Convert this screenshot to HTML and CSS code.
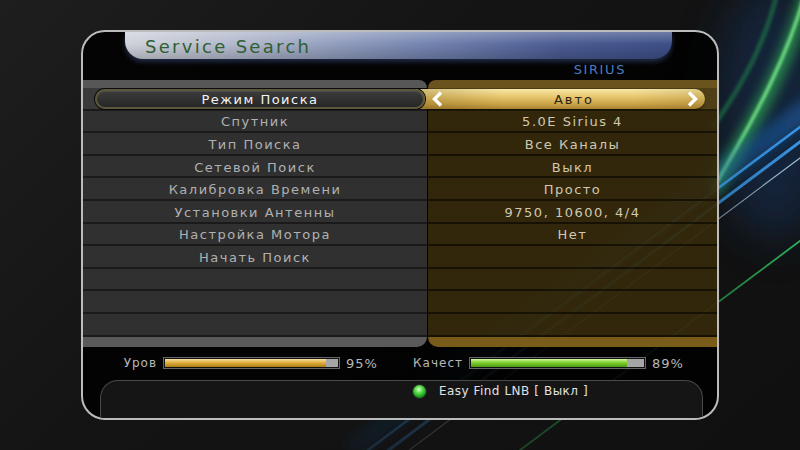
FILE: index.html
```html
<!DOCTYPE html>
<html lang="ru">
<head>
    <meta charset="UTF-8">
    <title>Service Search</title>
    <link rel="stylesheet" href="styles.css">
</head>
<body>
    <div class="screen">
        <!-- background light streaks -->
        <svg class="streaks" width="800" height="450" viewBox="0 0 800 450">
            <defs>
                <filter id="glow" x="-50%" y="-50%" width="200%" height="200%"><feGaussianBlur stdDeviation="6"/></filter>
                <filter id="haze" x="-50%" y="-50%" width="200%" height="200%"><feGaussianBlur stdDeviation="22"/></filter>
                <filter id="soft" x="-20%" y="-20%" width="140%" height="140%"><feGaussianBlur stdDeviation="1.6"/></filter>
                <filter id="thin" x="-20%" y="-20%" width="140%" height="140%"><feGaussianBlur stdDeviation="0.7"/></filter>
                <linearGradient id="fadeGlow" gradientUnits="userSpaceOnUse" x1="820" y1="100" x2="350" y2="450">
                    <stop offset="0" stop-color="#1b5fa8" stop-opacity="0.6"/>
                    <stop offset="0.3" stop-color="#1b5fa8" stop-opacity="0.35"/>
                    <stop offset="1" stop-color="#1b5fa8" stop-opacity="0.08"/>
                </linearGradient>
                <linearGradient id="fadeBlue" gradientUnits="userSpaceOnUse" x1="820" y1="110" x2="360" y2="460">
                    <stop offset="0" stop-color="#3a9cf0" stop-opacity="1"/>
                    <stop offset="0.3" stop-color="#3a9cf0" stop-opacity="0.6"/>
                    <stop offset="1" stop-color="#3a9cf0" stop-opacity="0.15"/>
                </linearGradient>
                <linearGradient id="fadeWhite" gradientUnits="userSpaceOnUse" x1="820" y1="140" x2="370" y2="480">
                    <stop offset="0" stop-color="#c0e4ff" stop-opacity="0.9"/>
                    <stop offset="0.3" stop-color="#c0e4ff" stop-opacity="0.4"/>
                    <stop offset="1" stop-color="#c0e4ff" stop-opacity="0.1"/>
                </linearGradient>
                <linearGradient id="fadeGreen" gradientUnits="userSpaceOnUse" x1="820" y1="226" x2="480" y2="480">
                    <stop offset="0" stop-color="#2ec060" stop-opacity="1"/>
                    <stop offset="0.35" stop-color="#2ec060" stop-opacity="0.5"/>
                    <stop offset="1" stop-color="#2ec060" stop-opacity="0.25"/>
                </linearGradient>
            </defs>
            <ellipse cx="775" cy="110" rx="60" ry="130" fill="#12305a" opacity=".55" filter="url(#haze)"/>
            <path d="M808 -10 C792 50 762 112 712 192" stroke="#2fae55" stroke-width="14" fill="none" opacity=".7" filter="url(#glow)"/>
            <path d="M806 -10 C790 50 760 110 712 190" stroke="#7cf08c" stroke-width="3" fill="none" filter="url(#soft)"/>
            <path d="M778 -10 C766 40 745 82 712 128" stroke="#1f7a48" stroke-width="5" fill="none" opacity=".6" filter="url(#soft)"/>
            <path d="M820 100 L350 450" stroke="url(#fadeGlow)" stroke-width="22" fill="none" filter="url(#glow)"/>
            <path d="M820 112 L352 462" stroke="url(#fadeBlue)" stroke-width="2.5" fill="none" filter="url(#thin)"/>
            <path d="M820 127 L362 470" stroke="url(#fadeBlue)" stroke-width="3" fill="none" filter="url(#thin)"/>
            <path d="M820 143 L372 478" stroke="url(#fadeWhite)" stroke-width="1.2" fill="none"/>
            <path d="M820 226 L480 480" stroke="url(#fadeGreen)" stroke-width="1.8" fill="none" filter="url(#thin)"/>
        </svg>

        <div class="panel">
            <div class="title-tab"><span>Service Search</span></div>
            <div class="sat-name">SIRIUS</div>

            <div class="menu">
                <div class="cell l head"></div><div class="cell r head"></div>

                <div class="cell l sel"><div class="pill-dark">Режим Поиска</div></div>
                <div class="cell r sel">
                    <div class="pill-gold">
                        <svg width="11" height="16" viewBox="0 0 11 16"><polyline points="9,1.5 2.5,8 9,14.5" fill="none" stroke="#fff" stroke-width="3.4"/></svg>
                        <span class="pill-text">Авто</span>
                        <svg width="11" height="16" viewBox="0 0 11 16"><polyline points="2,1.5 8.5,8 2,14.5" fill="none" stroke="#fff" stroke-width="3.4"/></svg>
                    </div>
                </div>

                <div class="cell l">Спутник</div><div class="cell r">5.0E Sirius 4</div>
                <div class="cell l">Тип Поиска</div><div class="cell r">Все Каналы</div>
                <div class="cell l">Сетевой Поиск</div><div class="cell r">Выкл</div>
                <div class="cell l">Калибровка Времени</div><div class="cell r">Просто</div>
                <div class="cell l">Установки Антенны</div><div class="cell r">9750, 10600, 4/4</div>
                <div class="cell l">Настройка Мотора</div><div class="cell r">Нет</div>
                <div class="cell l">Начать Поиск</div><div class="cell r"></div>
                <div class="cell l"></div><div class="cell r"></div>
                <div class="cell l"></div><div class="cell r"></div>
                <div class="cell l"></div><div class="cell r"></div>

                <div class="cell l foot"></div><div class="cell r foot"></div>
            </div>

            <div class="signal">
                <span class="sig-label first">Уров</span>
                <div class="bar"><div class="track"><div class="fill gold" style="width: 93%"></div></div></div>
                <span class="pct">95%</span>
                <span class="sig-label second">Качест</span>
                <div class="bar"><div class="track"><div class="fill green" style="width: 90%"></div></div></div>
                <span class="pct">89%</span>
            </div>

            <div class="info">
                <span class="led"></span>
                <span class="info-text">Easy Find LNB [ Выкл ]</span>
            </div>
        </div>
    </div>
</body>
</html>
```

FILE: styles.css
```css
body {
    margin: 0;
    background-color: #101010;
    font-family: "DejaVu Sans", sans-serif;
}

.screen {
    position: relative;
    width: 800px;
    height: 450px;
    overflow: hidden;
    box-sizing: border-box;
    padding-top: 30px;
    background: linear-gradient(135deg, #1e1e1e 0%, #141414 40%, #101010 100%);
}

.streaks {
    position: absolute;
    left: 0;
    top: 0;
}

.panel {
    position: relative;
    margin-left: 81px;
    width: 638px;
    height: 390px;
    box-sizing: border-box;
    border: 2px solid #bcbcbc;
    border-radius: 24px;
    background: rgba(0, 0, 0, 0.84);
    overflow: hidden;
    display: flex;
    flex-direction: column;
}

/* header tab */
.title-tab {
    margin-left: 42px;
    width: 547px;
    height: 27px;
    flex-shrink: 0;
    box-sizing: border-box;
    padding-left: 20px;
    display: flex;
    align-items: center;
    border-radius: 0 0 18px 18px;
    background:
        linear-gradient(180deg, rgba(255, 255, 255, 0.25) 0%, rgba(255, 255, 255, 0) 45%, rgba(0, 0, 0, 0.18) 100%),
        linear-gradient(90deg, #cfd2da 0%, #aab2c8 25%, #7484b0 55%, #4a5b92 80%, #3d4f88 100%);
    box-shadow: 0 3px 5px rgba(70, 90, 150, 0.45);
}

.title-tab span {
    font-size: 18px;
    letter-spacing: 2.3px;
    color: #2f5f32;
    padding-top: 1px;
}

.sat-name {
    height: 21px;
    flex-shrink: 0;
    line-height: 22px;
    text-align: right;
    padding-right: 91px;
    font-size: 13px;
    letter-spacing: 1.6px;
    color: #4a7cc0;
}

/* menu table */
.menu {
    display: grid;
    grid-template-columns: 344px 289px;
    grid-template-rows: 8px repeat(11, 22.6px) 10px;
    column-gap: 1px;
    flex-shrink: 0;
}

.cell {
    display: flex;
    align-items: center;
    justify-content: center;
    font-size: 13px;
    letter-spacing: 1.5px;
    box-sizing: border-box;
}

.cell.l {
    background: #303030;
    color: #b0b0b0;
    box-shadow: inset 0 -2px 0 #1a1a1a;
}

.cell.r {
    background: rgba(112, 86, 22, 0.44);
    color: #d0c8b0;
    box-shadow: inset 0 -2px 0 rgba(0, 0, 0, 0.55);
}

.cell.head.l {
    background: #575757;
    border-radius: 0 10px 0 0;
    box-shadow: none;
}

.cell.head.r {
    background: #6a531c;
    border-radius: 10px 0 0 0;
    box-shadow: none;
}

.cell.foot.l {
    background: #5a5a5a;
    border-radius: 0 0 10px 0;
    box-shadow: none;
}

.cell.foot.r {
    background: #7a5c1a;
    border-radius: 0 0 0 10px;
    box-shadow: none;
}

/* selected row */
.cell.sel {
    justify-content: flex-start;
}

.cell.sel.l {
    position: relative;
    z-index: 2;
    background: linear-gradient(90deg, #3a3a3a 330px, transparent 330px);
}

.cell.sel.r {
    background: #4e3f16;
}

.pill-dark {
    margin-left: 12px;
    width: 330px;
    height: 20px;
    box-sizing: border-box;
    border: 2px solid #5b573a;
    border-radius: 10px;
    background: linear-gradient(180deg, #3c3c3c, #262626);
    box-shadow: 0 0 0 1px #0c0c0c, inset 0 1px 0 #4c4c4c;
    color: #f4f4f4;
    display: flex;
    align-items: center;
    justify-content: center;
}

.pill-gold {
    margin-left: -12px;
    width: 289px;
    height: 20px;
    flex-shrink: 0;
    box-sizing: border-box;
    padding: 0 7px 0 16px;
    border-radius: 0 10px 10px 0;
    background:
        linear-gradient(90deg, rgba(90, 60, 0, 0.25) 0%, rgba(255, 255, 255, 0) 30%, rgba(255, 255, 255, 0) 75%, rgba(90, 60, 0, 0.15) 100%),
        linear-gradient(180deg, #f8e8a8 0%, #e6c66c 40%, #caa448 75%, #a88432 100%);
    box-shadow: 0 1px 2px rgba(0, 0, 0, 0.6);
    display: flex;
    align-items: center;
}

.pill-text {
    flex: 1;
    text-align: center;
    padding-left: 18px;
    color: #2b2416;
    letter-spacing: 2px;
}

/* signal bars */
.signal {
    height: 33px;
    flex-shrink: 0;
    display: flex;
    align-items: center;
    font-size: 12px;
    letter-spacing: 1px;
    color: #b8b8b8;
}

.sig-label {
    text-align: right;
    margin-right: 6px;
}

.sig-label.first {
    width: 34px;
    margin-left: 40px;
}

.sig-label.second {
    width: 51px;
    margin-left: 28px;
}

.pct {
    width: 38px;
    margin-left: 6px;
    font-size: 13px;
}

.bar {
    width: 177px;
    height: 12px;
    box-sizing: border-box;
    border: 1px solid #666;
    background: #111;
    padding: 1px;
}

.track {
    height: 100%;
    background: #a6a6a6;
}

.fill {
    height: 100%;
}

.fill.gold {
    background: linear-gradient(180deg, #f6e0a0 0%, #e0b040 45%, #b07c10 100%);
}

.fill.green {
    background: linear-gradient(180deg, #d4f8a0 0%, #80d030 45%, #4c9a12 100%);
}

/* bottom info box */
.info {
    margin-left: 17px;
    width: 603px;
    height: 38px;
    flex-shrink: 0;
    box-sizing: border-box;
    border: 1px solid #4a4a4a;
    border-bottom: none;
    border-radius: 18px 18px 0 0;
    background: #151515;
    padding: 3px 0 0 312px;
    display: flex;
    align-items: flex-start;
}

.led {
    width: 13px;
    height: 13px;
    margin-top: 1px;
    border-radius: 50%;
    background: radial-gradient(circle at 45% 35%, #d8ffd0 0%, #60e050 30%, #18a018 65%, #0a5a0a 100%);
    box-shadow: 0 0 0 1px #2a2a2a;
}

.info-text {
    margin-left: 13px;
    font-size: 12px;
    letter-spacing: 0.4px;
    word-spacing: 0.5px;
    color: #e2e2e2;
    line-height: 14px;
}
```
